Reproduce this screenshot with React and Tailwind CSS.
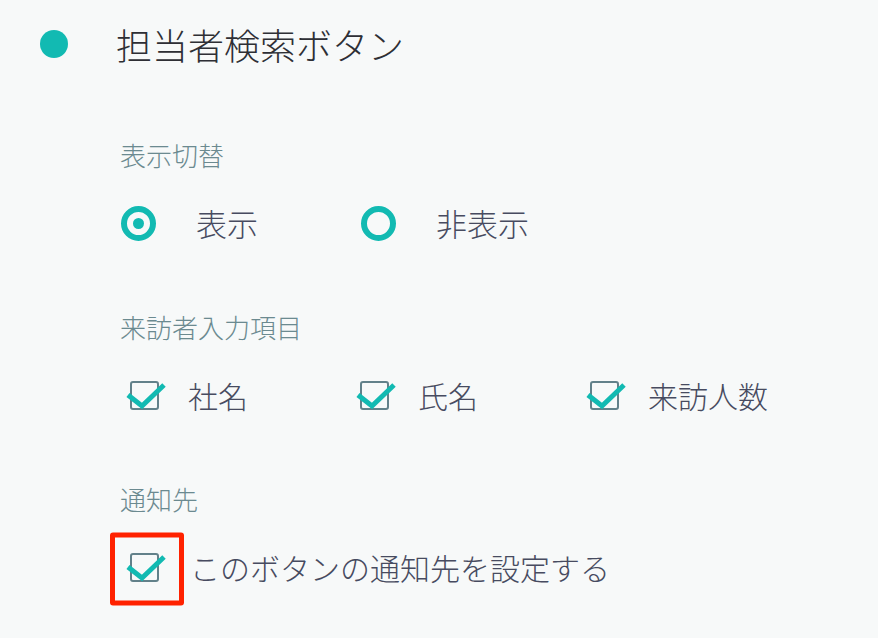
const TEAL = "#12bab2";

const Check = () => (
  <svg width="40" height="34" viewBox="0 0 40 34" className="shrink-0">
    <rect x="5" y="4" width="27" height="27" rx="2" fill="none" stroke="#62818a" strokeWidth="2" />
    <path d="M2 17 L16 28 L38 7" fill="none" stroke={TEAL} strokeWidth="5" />
  </svg>
);

const Radio = ({ on }) => (
  <span className="w-[35px] h-[35px] rounded-full border-[6px] border-[#12bab2] flex items-center justify-center shrink-0">
    {on && <span className="w-[11px] h-[11px] rounded-full bg-[#12bab2]" />}
  </span>
);

const Section = ({ label, first, children }) => (
  <div className={first ? "mt-[46px]" : "mt-[58px]"}>
    <p className="h-10 flex items-center text-[26px] text-[#6b8a90]">{label}</p>
    <div className="mt-6 h-[50px] flex items-center">{children}</div>
  </div>
);

export default function App() {
  return (
    <div className="w-full h-[638px] overflow-hidden bg-[#f7f9f9] font-light font-['Noto_Sans_CJK_JP',sans-serif]">
      <div className="h-[88px] flex items-center pl-10 gap-12">
        <span className="w-7 h-7 rounded-full bg-[#12bab2]" />
        <h1 className="text-[36px] text-[#2e2f35]">担当者検索ボタン</h1>
      </div>

      <div className="pl-[120px]">
        <Section label="表示切替" first>
          {[
            { t: "表示", on: true },
            { t: "非表示", on: false },
          ].map((r) => (
            <div key={r.t} className="w-[240px] flex items-center gap-10 pl-px">
              <Radio on={r.on} />
              <span className="text-[31px] text-[#474b60]">{r.t}</span>
            </div>
          ))}
        </Section>

        <Section label="来訪者入力項目">
          {["社名", "氏名", "来訪人数"].map((t) => (
            <div key={t} className="w-[230px] flex items-center gap-[22px] pl-[6px]">
              <Check />
              <span className="text-[30px] text-[#474b60]">{t}</span>
            </div>
          ))}
        </Section>

        <Section label="通知先">
          <div className="relative flex items-center gap-6 pl-[6px]">
            <span className="absolute left-[-10px] top-1/2 -translate-y-1/2 mt-[2px] w-[74px] h-[73px] border-[5px] border-[#ff2200] rounded-[3px]" />
            <Check />
            <span className="text-[30px] text-[#474b60]">このボタンの通知先を設定する</span>
          </div>
        </Section>
      </div>
    </div>
  );
}
